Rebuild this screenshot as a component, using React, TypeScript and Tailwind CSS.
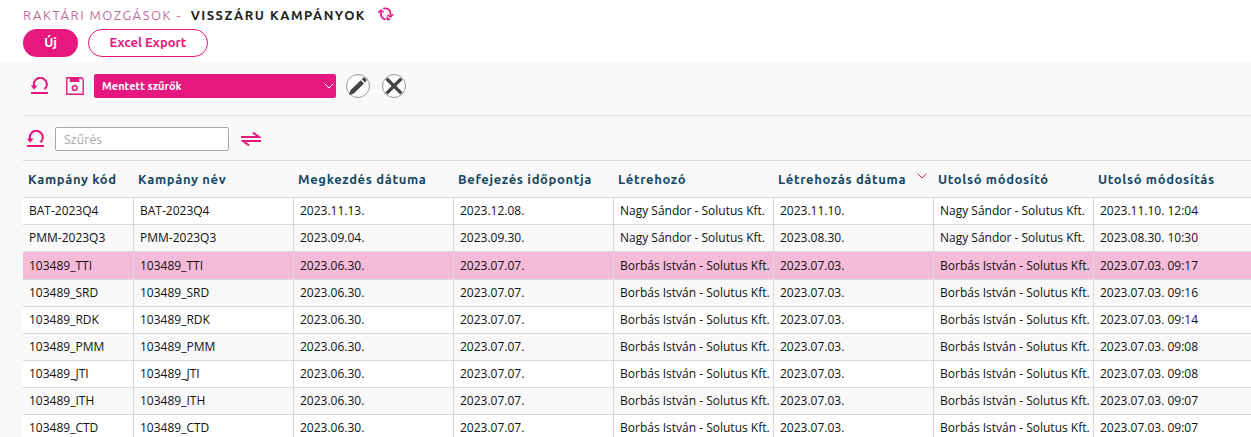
import { useState } from "react";

const columns = [
  { label: "Kampány kód", width: "w-[111px]" },
  { label: "Kampány név", width: "w-40" },
  { label: "Megkezdés dátuma", width: "w-40" },
  { label: "Befejezés időpontja", width: "w-40" },
  { label: "Létrehozó", width: "w-40" },
  { label: "Létrehozás dátuma", width: "w-40", sorted: true },
  { label: "Utolsó módosító", width: "w-40" },
  { label: "Utolsó módosítás", width: "" },
];

const nagy = "Nagy Sándor - Solutus Kft.";
const borbas = "Borbás István - Solutus Kft.";

const campaigns = [
  { code: "BAT-2023Q4", start: "2023.11.13.", end: "2023.12.08.", user: nagy, created: "2023.11.10.", modified: "2023.11.10. 12:04" },
  { code: "PMM-2023Q3", start: "2023.09.04.", end: "2023.09.30.", user: nagy, created: "2023.08.30.", modified: "2023.08.30. 10:30" },
  { code: "103489_TTI", start: "2023.06.30.", end: "2023.07.07.", user: borbas, created: "2023.07.03.", modified: "2023.07.03. 09:17" },
  { code: "103489_SRD", start: "2023.06.30.", end: "2023.07.07.", user: borbas, created: "2023.07.03.", modified: "2023.07.03. 09:16" },
  { code: "103489_RDK", start: "2023.06.30.", end: "2023.07.07.", user: borbas, created: "2023.07.03.", modified: "2023.07.03. 09:14" },
  { code: "103489_PMM", start: "2023.06.30.", end: "2023.07.07.", user: borbas, created: "2023.07.03.", modified: "2023.07.03. 09:08" },
  { code: "103489_JTI", start: "2023.06.30.", end: "2023.07.07.", user: borbas, created: "2023.07.03.", modified: "2023.07.03. 09:08" },
  { code: "103489_ITH", start: "2023.06.30.", end: "2023.07.07.", user: borbas, created: "2023.07.03.", modified: "2023.07.03. 09:07" },
  { code: "103489_CTD", start: "2023.06.30.", end: "2023.07.07.", user: borbas, created: "2023.07.03.", modified: "2023.07.03. 09:07" },
];

function RefreshIcon() {
  return (
    <svg width="16" height="14" viewBox="0 0 16 14" fill="none" stroke="#e6187f" strokeWidth="1.8">
      <path d="M2.9 4.5V6.5Q3 11.6 7.6 12.3" />
      <path d="M5.2 1.6Q9 .6 11.2 2.8 12.8 4.4 12.6 8.6" />
      <path d="M.4 5.8 2.9 3.2 5.6 5.2M9.6 7.8 12.5 10 15.2 7.2M9.3 9.6V12.4H12.2" strokeWidth="1.6" />
    </svg>
  );
}

function ResetIcon() {
  return (
    <svg width="18" height="18" viewBox="0 0 18 18" fill="none" stroke="#e6187f">
      <path d="M3.3 9.5A6.4 6.4 0 1 1 13.4 12.2" strokeWidth="2.2" />
      <path d="M-.2 8.6H6.6L3 12.8Z" fill="#e6187f" stroke="none" />
      <path d="M0 16H17" strokeWidth="2" />
    </svg>
  );
}

function SaveIcon() {
  return (
    <svg width="18" height="18" viewBox="0 0 18 18" fill="none" stroke="#e6187f">
      <path d="M.8.8H15.5L17.2 2.5V17.2H.8Z" strokeWidth="1.4" />
      <path d="M3.8 1H13.4V5H3.8Z" fill="#e6187f" stroke="none" />
      <circle cx="8.7" cy="11" r="2.3" strokeWidth="1.6" />
    </svg>
  );
}

function ChevronIcon({ className }: { className: string }) {
  return (
    <svg viewBox="0 0 10 6" fill="none" stroke="currentColor" className={className}>
      <path d="M.5.6 5 5 9.5.6" />
    </svg>
  );
}

function SwapIcon() {
  return (
    <svg width="20" height="14" viewBox="0 0 20 14" fill="none" stroke="#e6187f" strokeWidth="2">
      <path d="M0 5H18L12 .6M20 9H2L8 13.4" />
    </svg>
  );
}

function PencilIcon() {
  return (
    <svg width="18" height="18" viewBox="0 0 18 18" fill="#444">
      <path d="M0 18 1.4 13.3 11.8 3.2 15 6.4 4.8 16.6ZM12.8 2.2 14.2.8Q15 0 15.9.9L17.3 2.3Q18 3.1 17.3 3.9L16 5.4Z" />
    </svg>
  );
}

function CloseIcon() {
  return (
    <svg width="18" height="18" viewBox="0 0 18 18" stroke="#444" strokeWidth="3.4">
      <path d="M1.6 1.6 16.4 16.4M16.4 1.6 1.6 16.4" />
    </svg>
  );
}

export default function App() {
  const [selected, setSelected] = useState("103489_TTI");
  const [filter, setFilter] = useState("");

  return (
    <div className="h-screen overflow-hidden bg-[#f9f9f9] font-['Open_Sans','Noto_Sans',sans-serif] text-xs text-[#111]">
      {/* Title and main actions */}
      <header className="flex flex-col gap-1 bg-white pt-1.5 pb-[5px] pl-[23px] font-['Ubuntu','Noto_Sans',sans-serif]">
        <div className="flex h-[19px] items-center text-[13px] tracking-[1.5px]">
          <a href="#mozgasok" className="text-[#c06c9a]">
            RAKTÁRI MOZGÁSOK -
          </a>
          <h1 className="ml-[9px] font-bold text-[#222]">VISSZÁRU KAMPÁNYOK</h1>
          <button aria-label="Frissítés" className="ml-3 pb-1">
            <RefreshIcon />
          </button>
        </div>
        <div className="flex gap-2.5 text-[13px] font-bold">
          <button className="h-7 w-[55px] rounded-full bg-[#e6187f] text-white">Új</button>
          <button className="h-7 w-[120px] rounded-full border border-[#e6187f] bg-white text-[#e6187f]">
            Excel Export
          </button>
        </div>
      </header>

      <main className="pl-[23px]">
        {/* Saved filters */}
        <div className="flex h-[54px] items-center border-b border-[#e4e4e4] pb-1.5 pl-2">
          <button aria-label="Szűrők visszaállítása">
            <ResetIcon />
          </button>
          <button aria-label="Szűrő mentése" className="ml-[17px]">
            <SaveIcon />
          </button>
          <div className="relative ml-2.5">
            <select
              aria-label="Mentett szűrők"
              className="h-6 w-[242px] appearance-none rounded-xs bg-[#e6187f] pt-px pr-6 pl-2 font-['Ubuntu','Noto_Sans',sans-serif] text-[11px] font-bold text-white"
            >
              <option>Mentett szűrők</option>
            </select>
            <ChevronIcon className="pointer-events-none absolute top-[9px] right-[2px] w-2.5 text-white" />
          </div>
          <button
            aria-label="Szerkesztés"
            className="ml-2.5 flex size-6 items-center justify-center rounded-full border border-[#999] bg-white"
          >
            <PencilIcon />
          </button>
          <button
            aria-label="Törlés"
            className="ml-3 flex size-6 items-center justify-center rounded-full border border-[#999] bg-white"
          >
            <CloseIcon />
          </button>
        </div>

        {/* Quick filter */}
        <div className="flex h-11 items-center pt-0.5 pl-1">
          <button aria-label="Szűrés törlése">
            <ResetIcon />
          </button>
          <input
            type="text"
            aria-label="Szűrés"
            placeholder="Szűrés"
            value={filter}
            onChange={(e) => setFilter(e.target.value)}
            className="ml-2.5 h-6 w-[174px] rounded-xs border border-[#aaa] bg-white px-2 font-['Ubuntu','Noto_Sans',sans-serif] text-[13px] placeholder:text-[#aaa]"
          />
          <button aria-label="Váltás" className="ml-3">
            <SwapIcon />
          </button>
        </div>

        <table className="w-full table-fixed border-separate border-spacing-0 border-t border-[#d9d9d9]">
          <thead>
            <tr className="h-[37px]">
              {columns.map((col) => (
                <th
                  key={col.label}
                  className={`${col.width} border-b border-[#d9d9d9] pt-0.5 pl-1 text-left font-['Ubuntu','Noto_Sans',sans-serif] text-[13px] font-bold tracking-[0.05em] whitespace-nowrap text-[#154761] first:pl-[5px]`}
                >
                  <div className="flex items-center justify-between">
                    {col.label}
                    {col.sorted && <ChevronIcon className="mr-[7px] mb-2 w-2.5 text-[#e6187f]" />}
                  </div>
                </th>
              ))}
            </tr>
          </thead>
          <tbody>
            {campaigns.map((c) => {
              const cells = [c.code, c.code, c.start, c.end, c.user, c.created, c.user, c.modified];
              const active = c.code === selected;
              return (
                <tr
                  key={c.code}
                  onClick={() => setSelected(c.code)}
                  className={active ? "h-7 bg-[#f6bbd9]" : "h-[27px] odd:bg-white even:bg-[#f9f9f9]"}
                >
                  {cells.map((value, i) => (
                    <td
                      key={i}
                      className="border-r border-b border-[#d9d9d9] pl-1.5 whitespace-nowrap last:border-r-0"
                    >
                      {value}
                    </td>
                  ))}
                </tr>
              );
            })}
          </tbody>
        </table>
      </main>
    </div>
  );
}
